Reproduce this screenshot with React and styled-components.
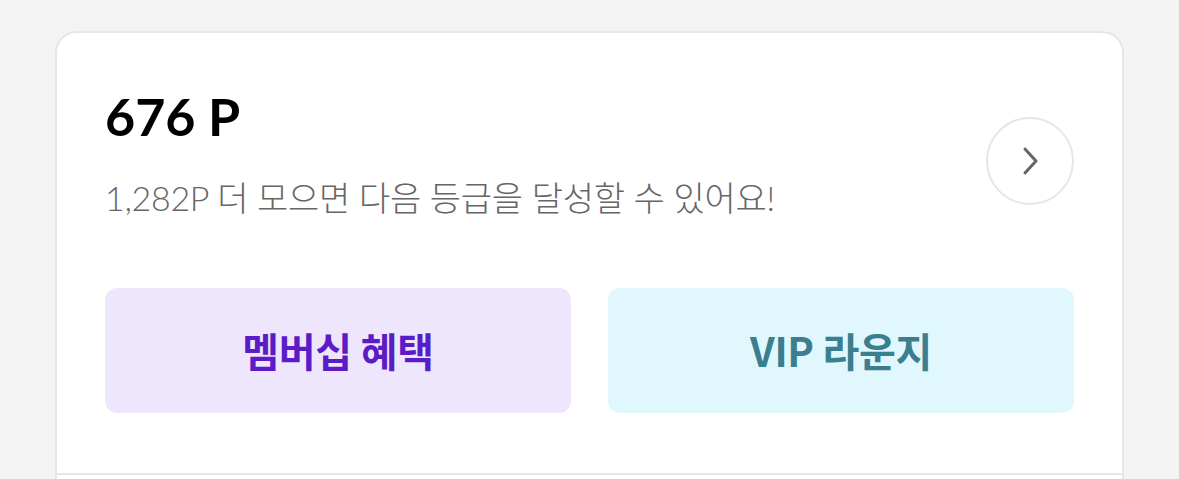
import React from "react";
import styled, { createGlobalStyle } from "styled-components";

const Global = createGlobalStyle`
  html, body { margin: 0; padding: 0; background: #f3f3f3; }
  body { font-family: Lato, "Noto Sans CJK KR", sans-serif; overflow: hidden; }
`;

const Page = styled.div`
  padding: 31px 55px 0 55px;
  height: 479px;
  box-sizing: border-box;
`;

const Card = styled.section`
  background: #fff;
  border: 2px solid #e6e6e6;
  border-radius: 22px;
  overflow: hidden;
`;

const Top = styled.div`
  padding: 53px 48px 60px 48px;
  border-bottom: 2px solid #e6e6e6;
`;

const Header = styled.div`
  display: flex;
  align-items: center;
  justify-content: space-between;
`;

const Info = styled.div`
  display: flex;
  flex-direction: column;
`;

const Points = styled.div`
  font-family: Lato, sans-serif;
  font-weight: 700;
  font-size: 52px;
  line-height: 60px;
  color: #000;
`;

const Sub = styled.div`
  margin-top: 30px;
  font-family: Lato, "Noto Sans CJK KR", sans-serif;
  font-weight: 300;
  font-size: 34px;
  line-height: 44px;
  color: #666;
  letter-spacing: -0.3px;
`;

const CircleButton = styled.button`
  width: 88px;
  height: 88px;
  border-radius: 50%;
  border: 2px solid #e6e6e6;
  background: #fff;
  display: flex;
  align-items: center;
  justify-content: center;
  padding: 0;
  margin-top: 16px;
`;

const Actions = styled.div`
  display: grid;
  grid-template-columns: 1fr 1fr;
  gap: 37px;
  margin-top: 68px;
`;

const Action = styled.button`
  height: 125px;
  border: none;
  border-radius: 12px;
  background: ${(p) => p.$bg};
  color: ${(p) => p.$fg};
  font-family: "Noto Sans CJK KR", sans-serif;
  font-weight: 700;
  font-size: 40px;
  letter-spacing: -0.3px;
  padding-bottom: 2px;
`;

const Rest = styled.div`
  height: 40px;
`;

export default function App() {
  return (
    <>
      <Global />
      <Page>
        <Card>
          <Top>
            <Header>
              <Info>
                <Points>676 P</Points>
                <Sub>1,282P 더 모으면 다음 등급을 달성할 수 있어요!</Sub>
              </Info>
              <CircleButton aria-label="more">
                <svg width="22" height="32" viewBox="0 0 22 32">
                  <path d="M6 4 L17 16 L6 28" fill="none" stroke="#666" strokeWidth="3" strokeLinecap="round" strokeLinejoin="round" />
                </svg>
              </CircleButton>
            </Header>
            <Actions>
              <Action $bg="#ede6fd" $fg="#5b1cc8">멤버십 혜택</Action>
              <Action $bg="#e0f8fd" $fg="#3b7e90">VIP 라운지</Action>
            </Actions>
          </Top>
          <Rest />
        </Card>
      </Page>
    </>
  );
}
